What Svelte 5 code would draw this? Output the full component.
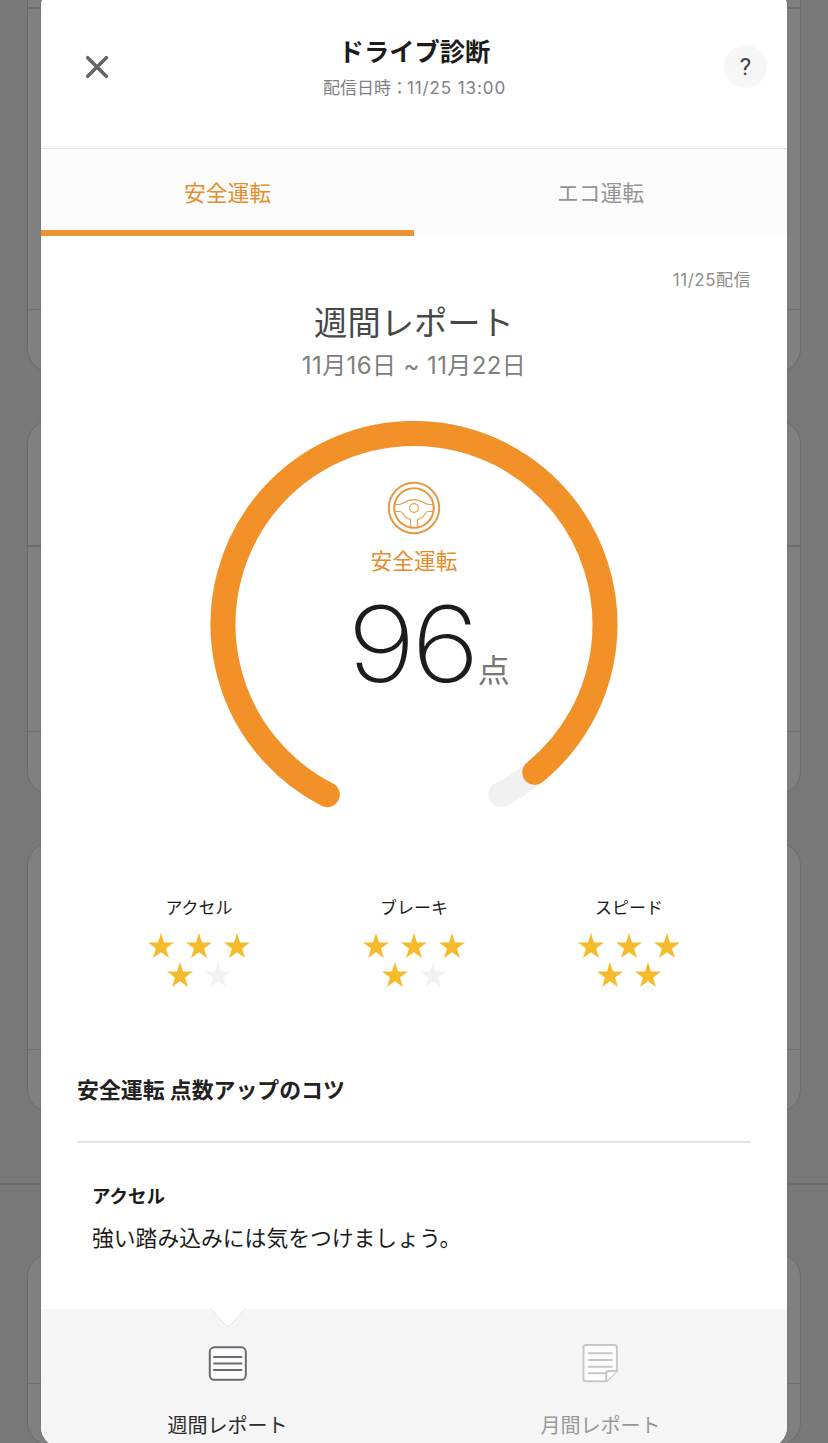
<script>
  const tabs = ["安全運転", "エコ運転"];
  const score = 96;
  const ratings = [
    { name: "アクセル", stars: 4 },
    { name: "ブレーキ", stars: 4 },
    { name: "スピード", stars: 5 },
  ];

  let activeTab = 0;
  let activeReport = "week";
</script>

<div class="screen">
  <div class="backdrop">
    <div class="card first"><div class="line"></div></div>
    <div class="card second"><div class="line wide"></div><div class="line"></div></div>
    <div class="card third"><div class="line"></div></div>
    <div class="separator"></div>
    <div class="card fourth"><div class="line"></div></div>
  </div>

  <div class="dialog">
    <header>
      <button class="close" aria-label="閉じる">
        <svg width="24" height="24" viewBox="0 0 24 24">
          <path d="M2.7 2.7 21.3 21.3M21.3 2.7 2.7 21.3" />
        </svg>
      </button>
      <div class="heading">
        <h1>ドライブ診断</h1>
        <p>配信日時：<span>11/25 13:00</span></p>
      </div>
      <button class="help">?</button>
    </header>

    <nav class="tabs">
      {#each tabs as tab, i}
        <button class:active={activeTab === i} on:click={() => (activeTab = i)}>{tab}</button>
      {/each}
    </nav>

    <main>
      <p class="delivered">11/25配信</p>
      <h2>週間レポート</h2>
      <p class="period">11月16日 ~ 11月22日</p>

      <div class="gauge">
        <svg class="ring" width="408" height="408" viewBox="0 0 408 408">
          <path class="track" d="M117.3 373.6A191 191 0 1 1 290.7 373.6" />
          <path
            class="value"
            pathLength="100"
            stroke-dasharray="{score} 200"
            d="M117.3 373.6A191 191 0 1 1 290.7 373.6"
          />
        </svg>
        <div class="gauge-content">
          <svg class="wheel" width="54" height="54" viewBox="0 0 54 54">
            <circle class="rim" cx="27" cy="27" r="25.2" />
            <circle class="rim" cx="27" cy="27" r="19.8" />
            <circle cx="27" cy="27" r="4.3" />
            <path d="M8 23.5H12C17 23.5 18 18.6 27 18.6S37 23.5 42 23.5H46" />
            <path d="M7.8 30.5H13C17 30.5 15.5 37.5 23.5 38.3V46.3" />
            <path d="M46.2 30.5H41C37 30.5 38.5 37.5 30.5 38.3V46.3" />
          </svg>
          <span class="gauge-label">安全運転</span>
          <div class="score"><span class="number">{score}</span><span class="unit">点</span></div>
        </div>
      </div>

      <div class="ratings">
        {#each ratings as rating}
          <div class="rating">
            <h3>{rating.name}</h3>
            <div class="stars">
              {#each [1, 2, 3, 4, 5] as n}
                <svg class:on={n <= rating.stars} width="26" height="26" viewBox="0 0 26 26">
                  <path d="M13 0 16 9.6H26L18 15.5 21 25 13 19.2 5 25 8 15.5 0 9.6H10Z" />
                </svg>
              {/each}
            </div>
          </div>
        {/each}
      </div>

      <section class="tips">
        <h2>安全運転 点数アップのコツ</h2>
        <div class="tip">
          <h3>アクセル</h3>
          <p>強い踏み込みには気をつけましょう。</p>
        </div>
      </section>
    </main>

    <footer>
      <button class:active={activeReport === "week"} on:click={() => (activeReport = "week")}>
        <svg class="pointer" width="38" height="20" viewBox="0 0 38 20">
          <path d="M1 0 17.5 18Q19 19.3 20.5 18L37 0" />
        </svg>
        <svg class="icon" width="40" height="42" viewBox="0 0 40 42">
          <rect x="1.8" y="4.3" width="36" height="32.5" rx="4.5" />
          <path d="M6 14H33.5M6 20.5H33.5M6 27H33.5" />
        </svg>
        <span>週間レポート</span>
      </button>
      <button class:active={activeReport === "month"} on:click={() => (activeReport = "month")}>
        <svg class="icon" width="40" height="42" viewBox="0.8 0.5 40 42">
          <path
            d="M5.8 2.4H34.2Q36.7 2.4 36.7 4.9V28.4L26.3 38.8H5.8Q3.3 38.8 3.3 36.3V4.9Q3.3 2.4 5.8 2.4Z"
          />
          <path d="M26 38.8V31Q26 28.4 28.6 28.4H36.7M8.5 10.8H31.5M8.5 17.5H31.5M8.5 24.2H31.5M8.5 30.8H25" />
        </svg>
        <span>月間レポート</span>
      </button>
    </footer>
  </div>
</div>

<style>
  :global(body) {
    background: #787878;
  }

  .screen {
    position: relative;
    height: 1443px;
    overflow: hidden;
    background: #787878;
    font-family: Inter, "Noto Sans CJK JP", sans-serif;
    font-weight: 390;
    color: #1c1c1c;
  }

  .screen * {
    box-sizing: border-box;
  }

  h1,
  h2,
  h3,
  p {
    margin: 0;
    font-weight: inherit;
  }

  button {
    border: none;
    padding: 0;
    background: none;
    color: inherit;
    font-family: inherit;
    font-weight: inherit;
  }

  svg {
    display: block;
    fill: none;
  }

  .backdrop {
    display: flex;
    flex-direction: column;
    height: 1470px;
  }

  .card {
    flex: none;
    margin: 0 27px 47px;
    border: 1px solid #6c6c6c;
    border-radius: 24px;
    background: #808080;
  }

  .first {
    height: 373px;
    border-top: none;
    border-radius: 0 0 24px 24px;
    padding-top: 7px;
  }

  .first .line {
    height: 303px;
    border-top: 2px solid #6c6c6c;
    border-bottom: 1px solid #717171;
  }

  .second {
    height: 375px;
    padding-top: 124px;
  }

  .second .line {
    height: 185px;
    border-bottom: 1px solid #717171;
  }

  .second .wide {
    height: 2px;
    background: #6c6c6c;
    border: none;
  }

  .third {
    height: 271px;
    margin-bottom: 70px;
    padding-top: 206px;
  }

  .third .line,
  .fourth .line {
    border-top: 1px solid #717171;
  }

  .separator {
    flex: none;
    height: 2px;
    margin-bottom: 68px;
    background: #6c6c6c;
  }

  .fourth {
    height: 193px;
    padding-top: 129px;
  }

  .dialog {
    position: absolute;
    top: -4px;
    left: 41px;
    display: flex;
    flex-direction: column;
    width: 746px;
    height: 1451px;
    padding-top: 4px;
    border-radius: 8px 8px 20px 20px;
    overflow: hidden;
    background: #fff;
    box-shadow: 0 0 2px rgba(0, 0, 0, 0.15);
  }

  header {
    display: flex;
    justify-content: space-between;
    align-items: flex-start;
    height: 149px;
    padding: 36px 20px 0 44px;
    border-bottom: 1px solid #e2e2e2;
  }

  .close {
    margin-top: 19px;
  }

  .close path {
    stroke: #65646a;
    stroke-width: 3.6;
    stroke-linecap: round;
  }

  .heading {
    text-align: center;
    padding-right: 4px;
  }

  h1 {
    font-size: 25.3px;
    font-weight: bold;
    line-height: 32px;
  }

  .heading p {
    margin-top: 8px;
    font-size: 17px;
    line-height: 24px;
    color: #808084;
  }

  .heading span {
    margin-left: -1px;
    letter-spacing: 0.9px;
  }

  .help {
    width: 43px;
    height: 43px;
    margin-top: 9px;
    border-radius: 50%;
    background: #f7f7f7;
    font-family: Roboto, sans-serif;
    font-size: 24px;
    color: #444;
  }

  .tabs {
    display: flex;
    height: 87px;
    background: #fcfcfc;
  }

  .tabs button {
    flex: 1;
    padding-top: 3px;
    border-bottom: 6px solid transparent;
    font-size: 21.8px;
    color: #949494;
  }

  .tabs .active {
    border-color: #ec9434;
    color: #e68c2a;
  }

  main {
    flex: 1;
    padding: 0 36px;
  }

  .delivered {
    margin-top: 32px;
    font-size: 17px;
    letter-spacing: 0.5px;
    line-height: 24px;
    text-align: right;
    color: #8e8e8e;
  }

  h2 {
    margin-top: 8px;
    font-size: 33.3px;
    line-height: 46px;
    text-align: center;
    color: #484848;
  }

  .period {
    margin-top: 5px;
    font-size: 24px;
    letter-spacing: 0.4px;
    line-height: 30px;
    text-align: center;
    color: #808080;
  }

  .gauge {
    display: grid;
    justify-content: center;
    height: 408px;
    margin-top: 40px;
  }

  .ring,
  .gauge-content {
    grid-area: 1 / 1;
  }

  .ring path {
    stroke-width: 25;
    stroke-linecap: round;
  }

  .ring .track {
    stroke: #f1f1f1;
  }

  .ring .value {
    stroke: #f29127;
  }

  .gauge-content {
    display: flex;
    flex-direction: column;
    align-items: center;
    padding-top: 60px;
  }

  .wheel {
    stroke: #e5a04f;
    stroke-width: 1.2;
  }

  .wheel .rim {
    stroke: #e39a45;
    stroke-width: 2;
  }

  .gauge-label {
    margin-top: 9px;
    font-size: 21.7px;
    line-height: 34px;
    color: #e68c2a;
  }

  .score {
    display: flex;
    align-items: baseline;
    margin: 6px 0 0 36px;
    line-height: 120px;
  }

  /* the thin digits are drawn a little wider than the face's own */
  .number {
    font-size: 105px;
    font-weight: 200;
    letter-spacing: -4px;
    transform: scaleX(1.12);
  }

  .unit {
    margin-left: 9px;
    font-size: 32px;
    color: #777;
  }

  .ratings {
    display: flex;
    justify-content: space-between;
    margin-top: 66px;
    padding: 0 64px;
  }

  .rating {
    width: 116px;
  }

  .rating h3 {
    font-size: 17px;
    line-height: 26px;
    text-align: center;
    white-space: nowrap;
  }

  .stars {
    display: flex;
    flex-wrap: wrap;
    justify-content: center;
    gap: 3px 12px;
    margin-top: 12px;
  }

  .stars path {
    fill: #f2f2f2;
  }

  .stars .on path {
    fill: #f5bb2b;
  }

  .tips h2 {
    margin-top: 85px;
    padding-bottom: 34px;
    border-bottom: 2px solid #e2e2e2;
    font-size: 21.9px;
    font-weight: bold;
    line-height: 34px;
    text-align: left;
    color: #222;
  }

  .tip {
    padding: 39px 15px;
  }

  .tip h3 {
    font-size: 18.5px;
    font-weight: bold;
    line-height: 28px;
  }

  .tip p {
    margin-top: 12px;
    font-size: 21.8px;
    line-height: 32px;
  }

  footer {
    display: flex;
    flex: none;
    height: 138px;
    background: #f6f6f6;
  }

  footer button {
    position: relative;
    display: flex;
    flex: 1;
    flex-direction: column;
    align-items: center;
    padding-top: 34px;
    font-size: 20px;
    color: #989898;
  }

  footer .active {
    color: #2c2c2c;
  }

  .pointer {
    position: absolute;
    top: -1px;
    left: calc(50% - 19px);
    fill: #fff;
    stroke: #e4e4e4;
  }

  .icon {
    fill: #fff;
    stroke: #c8c8c8;
    stroke-width: 2;
    stroke-linecap: round;
    stroke-linejoin: round;
  }

  .active .icon {
    stroke: #6c6a70;
  }

  footer span {
    margin-top: 26px;
    line-height: 30px;
  }
</style>
